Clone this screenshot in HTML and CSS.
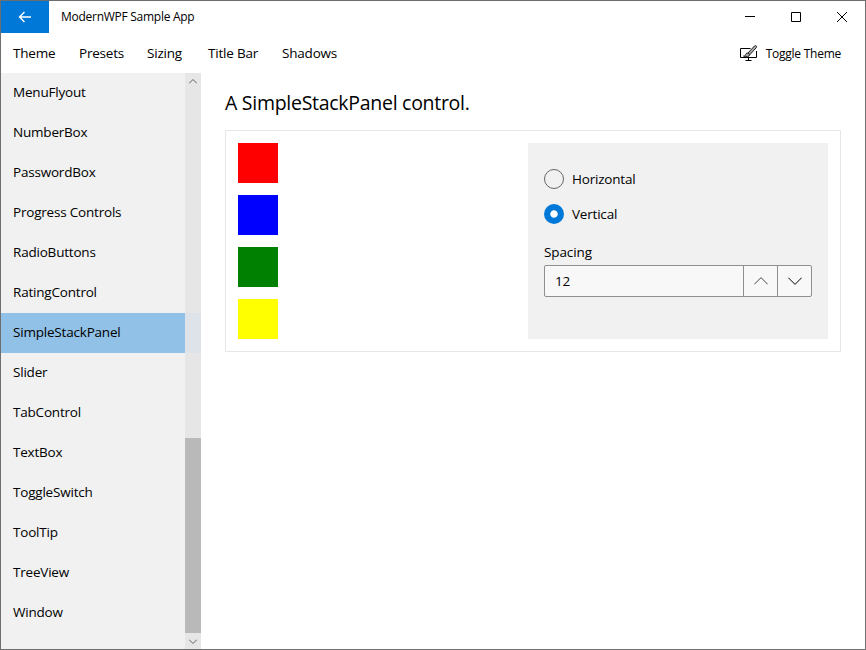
FILE: index.html
```html
<!DOCTYPE html>
<html lang="en">
<head>
<meta charset="utf-8">
<title>ModernWPF Sample App</title>
<link rel="stylesheet" href="styles.css">
</head>
<body>
<div class="window">
  <header class="titlebar">
    <button class="back" aria-label="Back"><svg width="14" height="12" viewBox="0 0 14 12"><path d="M13 6H1.5M6.500 1 1.500 6l5 5"/></svg></button>
    <span class="app-title">ModernWPF Sample App</span>
    <button class="caption" aria-label="Minimize"><svg width="10" height="10" viewBox="0 0 10 10"><path d="M0 4.5h10"/></svg></button>
    <button class="caption" aria-label="Maximize"><svg width="10" height="10" viewBox="0 0 10 10"><path d="M.5.5h9v9h-9z"/></svg></button>
    <button class="caption" aria-label="Close"><svg width="10" height="10" viewBox="0 0 10 10"><path d="m0 0 10 10M10 0 0 10"/></svg></button>
  </header>
  <nav class="menubar">
    <span class="menu m-theme">Theme</span>
    <span class="menu m-presets">Presets</span>
    <span class="menu m-sizing">Sizing</span>
    <span class="menu m-titlebar">Title Bar</span>
    <span class="menu">Shadows</span>
    <button class="toggle">
      <svg width="18" height="16" viewBox="0 0 18 16"><path d="M10.500 3.500h-10v9h16V6M5.500 15.500h6M8.500 12.500v3"/><path class="brush" d="m8 8 6.500-7c1.300-1 2.800.2 1.800 1.600L10 9.500M8 8c-2 0-2.300 1.200-2.600 2.300-.2.500-.8.800-1.900.8 2.800 1.100 6 .7 6.500-1.600z"/></svg>
      <span>Toggle Theme</span>
    </button>
  </nav>
  <div class="body">
    <aside class="sidebar">
      <ul class="list">
        <li>MenuFlyout</li>
        <li>NumberBox</li>
        <li>PasswordBox</li>
        <li>Progress Controls</li>
        <li>RadioButtons</li>
        <li>RatingControl</li>
        <li class="selected">SimpleStackPanel</li>
        <li>Slider</li>
        <li>TabControl</li>
        <li>TextBox</li>
        <li>ToggleSwitch</li>
        <li>ToolTip</li>
        <li>TreeView</li>
        <li>Window</li>
      </ul>
      <div class="scrollbar">
        <svg class="arrow" width="8" height="5" viewBox="0 0 8 5"><path d="m0 4.500 4-4 4 4"/></svg>
        <div class="track-tint"></div>
        <div class="thumb"></div>
        <svg class="arrow" width="8" height="5" viewBox="0 0 8 5"><path d="m0 .5 4 4 4-4"/></svg>
      </div>
    </aside>
    <main class="content">
      <h1>A SimpleStackPanel control.</h1>
      <section class="card">
        <div class="stack">
          <div class="box red"></div>
          <div class="box blue"></div>
          <div class="box green"></div>
          <div class="box yellow"></div>
        </div>
        <div class="options">
          <div class="radio"><span class="dot"></span><span>Horizontal</span></div>
          <div class="radio"><span class="dot checked"></span><span>Vertical</span></div>
          <div class="label">Spacing</div>
          <div class="number">
            <span class="value">12</span>
            <span class="spin up"><svg width="14" height="8" viewBox="0 0 14 8"><path d="m.3 7.300 6.700-6.700 6.700 6.700"/></svg></span>
            <span class="spin"><svg width="14" height="8" viewBox="0 0 14 8"><path d="m.3.700 6.700 6.700 6.700-6.700"/></svg></span>
          </div>
        </div>
      </section>
    </main>
  </div>
</div>
</body>
</html>
```
FILE: styles.css
```css
* { box-sizing: border-box; }
body {
  margin: 0;
  font-family: "Open Sans", "Noto Sans", sans-serif;
  font-size: 13.5px;
  letter-spacing: -0.2px;
  color: #000;
  background: #fff;
}
button {
  border: 0;
  padding: 0;
  background: none;
  color: inherit;
  font: inherit;
  letter-spacing: inherit;
}
svg { display: block; fill: none; stroke: #000; }
.window {
  width: 866px;
  height: 650px;
  border: 1px solid #6e6e6e;
  display: flex;
  flex-direction: column;
}
.titlebar { display: flex; height: 32px; }
.back {
  width: 48px;
  background: #0078d7;
  display: flex;
  align-items: center;
  justify-content: center;
}
.back svg { stroke: #fff; stroke-width: 1.4; }
.app-title { flex: 1; padding-left: 12px; line-height: 32px; font-size: 12px; letter-spacing: -0.27px; }
.caption { width: 46px; display: flex; align-items: center; justify-content: center; }
.menubar { height: 40px; display: flex; align-items: center; padding-left: 12px; }
.menu { line-height: 40px; }
.m-theme { width: 66px; }
.m-presets { width: 68px; }
.m-sizing { width: 61px; }
.m-titlebar { width: 74px; }
.toggle { margin-left: auto; margin-right: 24px; display: flex; align-items: center; gap: 8px; font-size: 12px; letter-spacing: -0.25px; }
.brush { fill: #aaa; stroke: #222; }
.body { flex: 1; display: flex; min-height: 0; }
.sidebar { width: 200px; display: flex; background: #f1f1f1; }
.list { flex: 1; list-style: none; margin: 0; padding: 0; }
.list li { height: 40px; line-height: 39px; padding-left: 12px; }
.list .selected { background: #91c1e7; }
.scrollbar { width: 16px; background: #e6e6e6; display: flex; flex-direction: column; padding: 6px 0 5px; }
.arrow { margin: 0 auto; flex: none; stroke: #606060; }
.track-tint { height: 40px; margin-top: 229px; background: #dde3e8; }
.thumb { height: 195px; margin: 85px 0 6px; background: #b9b9b9; }
.content { flex: 1; padding: 16px 24px; }
h1 { margin: 0 0 13px; font-size: 19.5px; line-height: 28px; font-weight: 400; letter-spacing: -0.28px; }
.card { height: 222px; border: 1px solid #e6e6e6; padding: 12px; display: flex; justify-content: space-between; }
.stack { display: flex; flex-direction: column; gap: 12px; }
.box { width: 40px; height: 40px; }
.red { background: #f00; }
.blue { background: #00f; }
.green { background: #008000; }
.yellow { background: #ff0; }
.options { width: 300px; background: #f1f1f1; padding: 18px 16px; }
.radio { height: 35px; display: flex; align-items: center; gap: 8px; }
.dot { width: 20px; height: 20px; border: 1px solid #666; border-radius: 50%; }
.dot.checked { border: 0; background: radial-gradient(circle, #fff 3.3px, #0078d7 4.1px); }
.label { margin-top: 11px; height: 23px; line-height: 20px; letter-spacing: -0.1px; }
.number { height: 32px; display: flex; background: #f8f8f8; border: 1px solid #8f8f8f; border-radius: 2px; }
.value { flex: 1; padding-left: 10px; line-height: 30px; }
.spin { width: 34px; border-left: 1px solid #8f8f8f; display: flex; align-items: center; justify-content: center; }
.up svg { stroke: #444; }
```
